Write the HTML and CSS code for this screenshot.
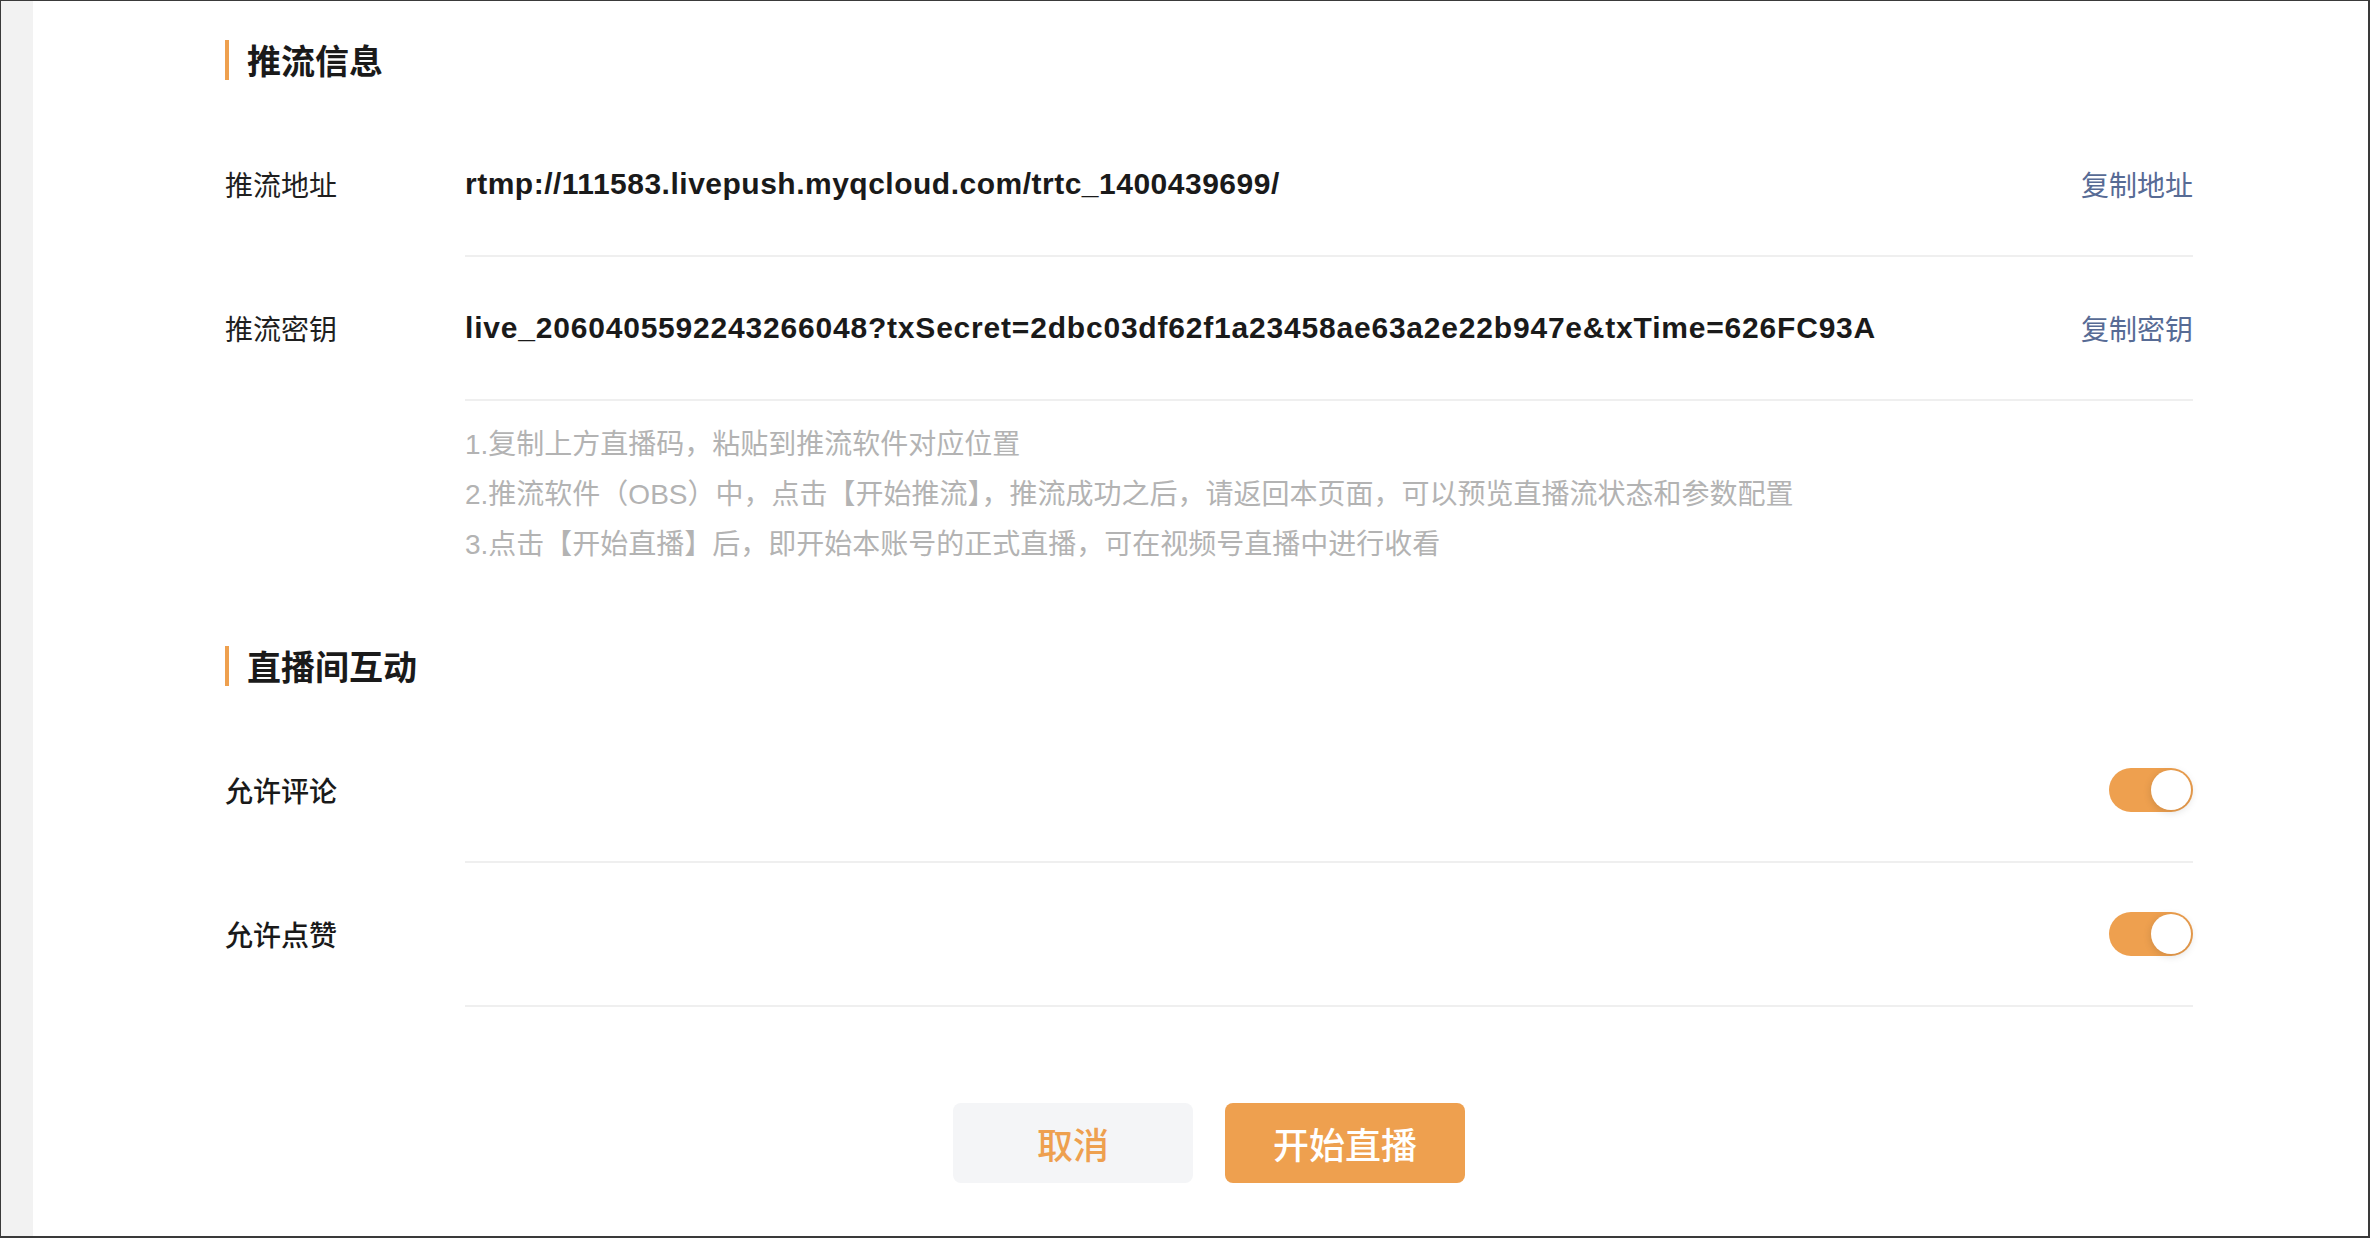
FILE: index.html
```html
<!DOCTYPE html>
<html lang="zh-CN">
<head>
<meta charset="utf-8">
<title>推流信息</title>
<link rel="stylesheet" href="styles.css">
</head>
<body>
<div class="frame">
  <aside class="strip"></aside>
  <main class="panel">
    <section class="section">
      <h2 class="section-title">推流信息</h2>
      <div class="row">
        <div class="row-label">推流地址</div>
        <div class="row-body">
          <span class="row-value">rtmp://111583.livepush.myqcloud.com/trtc_1400439699/</span>
          <a class="row-link">复制地址</a>
        </div>
      </div>
      <div class="row">
        <div class="row-label">推流密钥</div>
        <div class="row-body">
          <span class="row-value row-value-key">live_2060405592243266048?txSecret=2dbc03df62f1a23458ae63a2e22b947e&amp;txTime=626FC93A</span>
          <a class="row-link">复制密钥</a>
        </div>
      </div>
      <div class="tips">
        <p class="tip">1.复制上方直播码，粘贴到推流软件对应位置</p>
        <p class="tip">2.推流软件（OBS）中，点击【开始推流】，推流成功之后，请返回本页面，可以预览直播流状态和参数配置</p>
        <p class="tip">3.点击【开始直播】后，即开始本账号的正式直播，可在视频号直播中进行收看</p>
      </div>
    </section>

    <section class="section section-interact">
      <h2 class="section-title">直播间互动</h2>
      <div class="row">
        <div class="row-label row-label-strong">允许评论</div>
        <div class="row-body row-body-end">
          <span class="switch is-on"><span class="switch-knob"></span></span>
        </div>
      </div>
      <div class="row">
        <div class="row-label row-label-strong">允许点赞</div>
        <div class="row-body row-body-end">
          <span class="switch is-on"><span class="switch-knob"></span></span>
        </div>
      </div>
    </section>

    <div class="actions">
      <button class="btn btn-cancel">取消</button>
      <button class="btn btn-primary">开始直播</button>
    </div>
  </main>
</div>
</body>
</html>
```

FILE: styles.css
```css
* {
  box-sizing: border-box;
}

html, body {
  margin: 0;
  padding: 0;
  background: #ffffff;
}

body {
  font-family: "Liberation Sans", "Noto Sans CJK SC", sans-serif;
  color: #1a1a1a;
}

.frame {
  width: 2370px;
  height: 1238px;
  display: flex;
  border: 1px solid #3a3a3a;
  border-right-width: 2px;
  border-bottom-width: 2px;
  overflow: hidden;
}

.strip {
  width: 32px;
  flex: none;
  background: #f2f2f2;
}

.panel {
  flex: 1;
  padding: 39px 175px 0 192px;
  background: #ffffff;
}

.section-title {
  margin: 0;
  height: 40px;
  line-height: 40px;
  border-left: 4px solid #eea04f;
  padding-left: 18px;
  font-family: "Noto Sans CJK SC", sans-serif;
  font-size: 34px;
  font-weight: 700;
  color: #1a1a1a;
}

.section-title + .row {
  margin-top: 33px;
}

.row {
  display: flex;
  align-items: center;
}

.row-label {
  width: 240px;
  flex: none;
  font-family: "Noto Sans CJK SC", sans-serif;
  font-size: 28px;
  font-weight: 400;
  color: #1f1f1f;
  line-height: 40px;
  padding-bottom: 2px;
}

.row-label-strong {
  font-weight: 500;
  color: #1a1a1a;
}

.row-body {
  flex: 1;
  height: 144px;
  border-bottom: 2px solid #efefef;
  display: flex;
  align-items: center;
  justify-content: space-between;
}

.row-body-end {
  justify-content: flex-end;
}

.row-value {
  font-family: "Liberation Sans", "Noto Sans CJK SC", sans-serif;
  font-size: 30px;
  font-weight: 700;
  letter-spacing: 0.5px;
  color: #1a1a1a;
  white-space: nowrap;
}

.row-value-key {
  letter-spacing: 0.8px;
}

.row-link {
  font-family: "Noto Sans CJK SC", sans-serif;
  font-size: 28px;
  color: #576b95;
  cursor: pointer;
  white-space: nowrap;
}

.tips {
  margin-top: 19px;
  padding-left: 240px;
}

.tip {
  margin: 0;
  font-family: "Liberation Sans", "Noto Sans CJK SC", sans-serif;
  font-size: 28px;
  line-height: 50px;
  color: #b3b3b3;
}

.section-interact {
  margin-top: 76px;
}

.switch {
  width: 84px;
  height: 44px;
  border-radius: 22px;
  background: #eea04f;
  padding: 2px;
  display: flex;
  justify-content: flex-end;
}

.switch-knob {
  width: 40px;
  height: 40px;
  border-radius: 50%;
  background: #ffffff;
  box-shadow: 0 2px 8px rgba(0, 0, 0, 0.14);
}

.actions {
  margin-top: 96px;
  display: flex;
  justify-content: center;
  gap: 32px;
}

.btn {
  width: 240px;
  height: 80px;
  border: none;
  border-radius: 8px;
  font-family: "Noto Sans CJK SC", sans-serif;
  font-size: 36px;
  font-weight: 500;
  cursor: pointer;
  padding: 0;
}

.btn-cancel {
  background: #f4f5f7;
  color: #eea04f;
}

.btn-primary {
  background: #eea04f;
  color: #ffffff;
}
```
